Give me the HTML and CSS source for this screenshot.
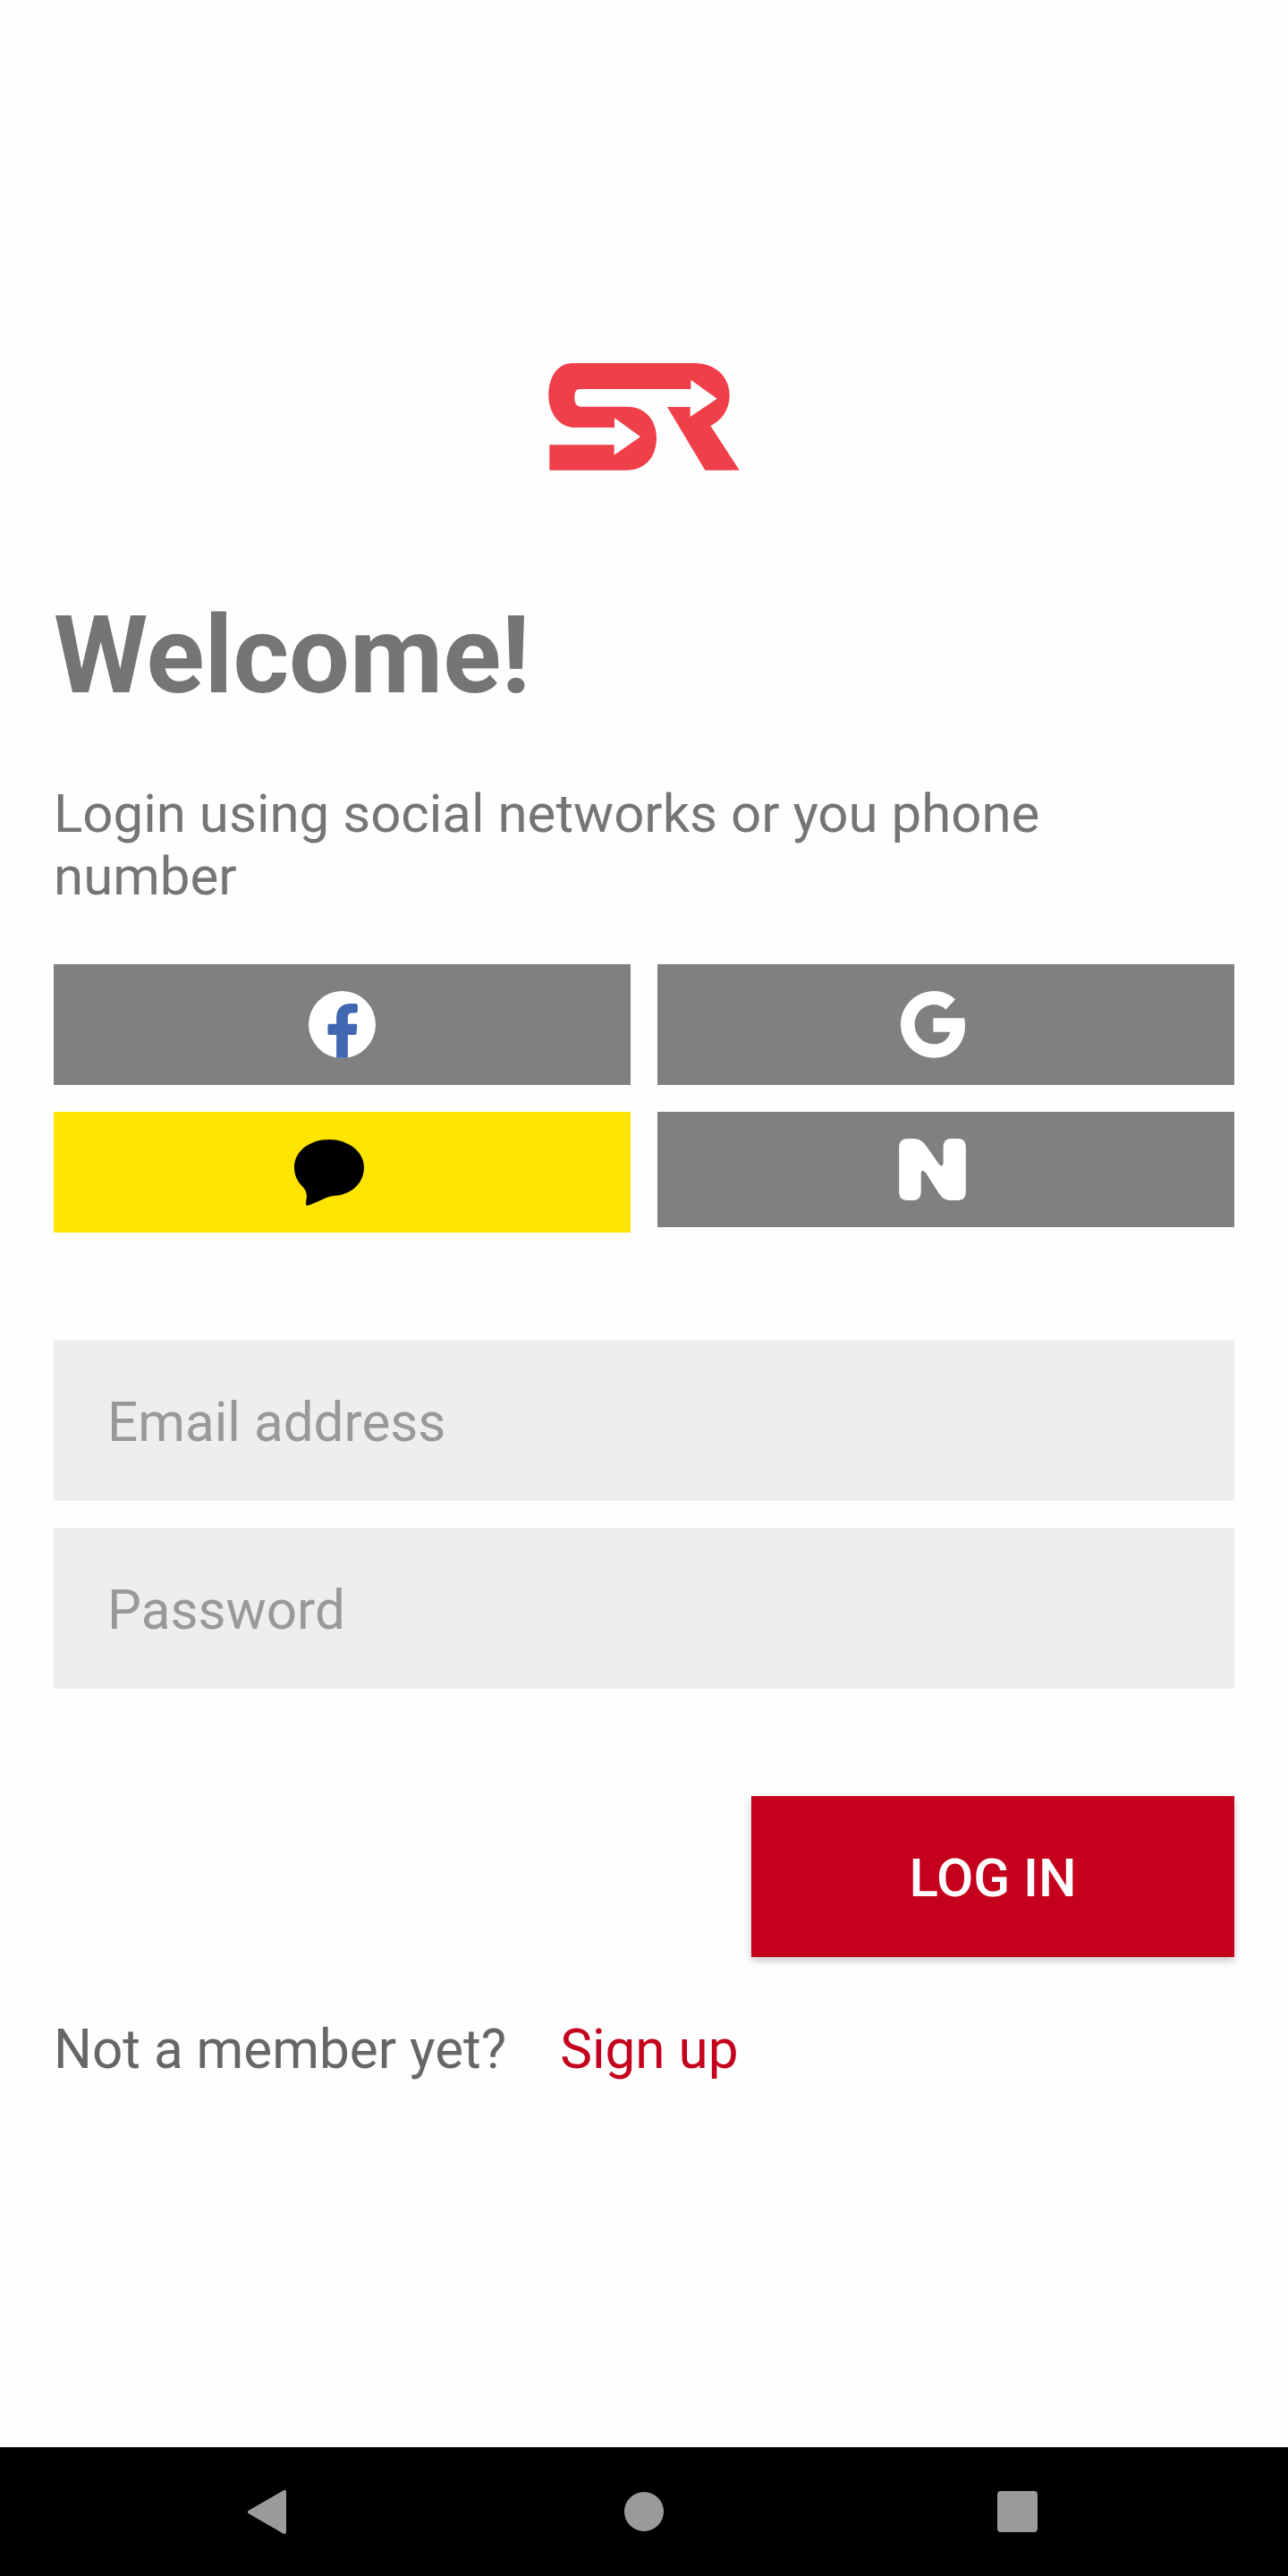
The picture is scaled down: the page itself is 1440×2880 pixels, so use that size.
FILE: index.html
```html
<!DOCTYPE html>
<html lang="en">

<head>
  <meta charset="UTF-8">
  <meta name="viewport" content="width=device-width, initial-scale=1.0">
  <title>Welcome</title>
  <link rel="stylesheet" href="styles.css">
</head>

<body>
  <main class="login">
    <div class="logo">
      <svg width="214" height="120" viewBox="100 78 640 360">
        <path fill="#ef3f4a" d="M180 78H590C660 78 707 125 707 185C707 235 680 270 643 288L740 437H625L498 225H575V258L665 197L577 134V165H205C192 165 187 175 187 193C187 215 195 224 210 224H365C425 224 462 270 462 330C462 395 420 437 365 437H103V352H320V386L408 325L321 262V294H190C135 294 100 245 100 185C100 125 130 78 180 78Z" />
      </svg>
    </div>

    <h1>Welcome!</h1>
    <p class="intro">Login using social networks or you phone number</p>

    <div class="social-grid">
      <button class="social-btn">
        <svg width="75" height="75" viewBox="135 145 224 224">
          <circle cx="247" cy="257" r="112" fill="#fff" />
          <path fill="#4267b2" d="M228 368V291H205C200 291 199 288 199 285V261C199 257 202 255 205 255H228V235C228 205 245 187 275 187H292C297 187 299 190 299 194V210C299 215 296 218 291 218H280C270 218 266 223 266 232V255H291C296 255 298 258 297 262L295 285C295 289 292 291 288 291H266V368Z" />
        </svg>
      </button>
      <button class="social-btn shifted">
        <svg width="72" height="75" viewBox="138 144 216 225">
          <path fill="#fff" d="M250 144C278 144 302 154 321 172L289 206C279 196 266 190 250 190C212 190 185 220 185 256C185 293 212 322 250 322C276 322 297 308 304 281H247V235H351C353 243 354 250 354 260C354 322 310 368 250 368C188 368 138 318 138 256C138 194 188 144 250 144Z" />
        </svg>
      </button>
      <button class="social-btn shifted kakao">
        <svg width="78" height="74" viewBox="84 640 234 222">
          <path d="M200 640C265 640 318 680 318 733C318 790 270 826 222 828C190 830 160 852 130 861C123 863 122 858 124 845C128 825 125 812 112 798C95 782 84 760 84 733C84 680 135 640 200 640Z" />
        </svg>
      </button>
      <button class="social-btn shifted naver">
        <svg width="75" height="69" viewBox="135 638 225 208">
          <path fill="#fff" d="M135 668C135 648 145 638 165 638H182C205 638 218 650 228 665L270 725C277 733 284 730 284 720V668C284 648 292 638 312 638H332C352 638 360 648 360 668V816C360 836 352 846 332 846H312C290 846 278 835 268 820L224 752C216 743 209 745 209 756V816C209 836 200 846 182 846H163C143 846 135 836 135 816Z" />
        </svg>
      </button>
    </div>

    <form class="login-form">
      <input type="text" placeholder="Email address">
      <input type="password" placeholder="Password">
      <div class="btn-container">
        <button type="button" class="btn">LOG IN</button>
      </div>
    </form>

    <p class="signup">Not a member yet? <a href="#">Sign up</a></p>
  </main>

  <nav class="nav-bar">
    <svg width="43" height="49" viewBox="0 0 43 49">
      <path fill="#9a9a9a" stroke="#9a9a9a" stroke-width="4" stroke-linejoin="round" d="M41 2V47L2 24.5Z" />
    </svg>
    <span class="nav-circle"></span>
    <span class="nav-square"></span>
  </nav>
</body>

</html>
```

FILE: styles.css
```css
body {
  font-family: Roboto, Arial, sans-serif;
  margin: 0;
  background-color: #fefefe;
  color: #757575;
  display: flex;
  flex-direction: column;
  min-height: 100vh;
}

.login {
  flex: 1;
  padding: 406px 60px 0;
}

.logo {
  display: flex;
  justify-content: center;
}

h1 {
  margin: 137px 0 0;
  font-size: 120.4px;
  line-height: 140px;
  font-weight: 700;
  color: #757575;
}

.intro {
  margin: 72px 0 0;
  font-size: 60px;
  line-height: 70px;
  color: #757575;
}

.social-grid {
  display: grid;
  grid-template-columns: 1fr 1fr;
  gap: 30px;
  align-items: start;
  margin-top: 63px;
}

.social-btn {
  display: flex;
  align-items: center;
  justify-content: center;
  height: 135px;
  padding: 0;
  border: none;
  background-color: #808080;
}

.social-btn.shifted {
  padding-right: 30px;
}

.kakao {
  background-color: #ffe500;
}

.naver {
  height: 129px;
}

.login-form {
  margin-top: 120px;
}

.login-form input {
  display: block;
  box-sizing: border-box;
  width: 100%;
  height: 180px;
  margin-bottom: 30px;
  padding: 4px 60px 0;
  border: none;
  background-color: #eeeeee;
  font-family: inherit;
  font-size: 60.2px;
}

.login-form input::placeholder {
  color: #999;
  opacity: 1;
}

.btn-container {
  display: flex;
  justify-content: flex-end;
  margin-top: 120px;
}

.btn {
  width: 540px;
  height: 180px;
  padding-top: 3px;
  border: none;
  background-color: #c5001c;
  color: #fff;
  font-family: inherit;
  font-size: 60px;
  font-weight: 500;
  box-shadow: 0 4px 8px rgba(0, 0, 0, 0.22);
}

.signup {
  margin: 69px 0 0;
  font-size: 60.2px;
  line-height: 70px;
  color: #666;
}

.signup a {
  margin-left: 45px;
  color: #c5001c;
  text-decoration: none;
}

.nav-bar {
  display: flex;
  align-items: center;
  height: 144px;
  padding-left: 277px;
  background-color: #000;
}

.nav-circle {
  width: 44px;
  height: 44px;
  margin: 0 373px 0 378px;
  border-radius: 50%;
  background-color: #9a9a9a;
}

.nav-square {
  width: 45px;
  height: 46px;
  border-radius: 4px;
  background-color: #9a9a9a;
}
```
